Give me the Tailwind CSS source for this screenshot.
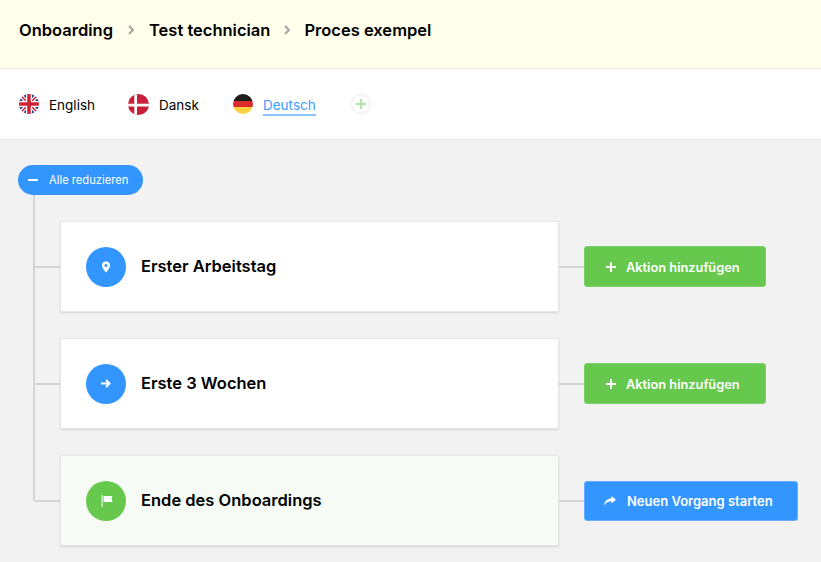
<!DOCTYPE html>
<html lang="de">
<head>
    <meta charset="UTF-8">
    <title>Proces exempel</title>
    <script src="https://cdn.jsdelivr.net/npm/@tailwindcss/browser@4"></script>
</head>
<body class="font-['Inter','Open_Sans',sans-serif] bg-[#f2f2f2] text-black overflow-hidden h-[562px]">

    <!-- Breadcrumb -->
    <div class="h-[69px] bg-[#ffffeb] border-b border-[#ebebdd] flex items-center pl-[19px] pb-[8px] text-[16.500px] font-semibold">
        <span>Onboarding</span>
        <svg class="w-[8px] h-[10px] mx-[14px]" viewBox="0 0 8 10" fill="none" stroke="#a3a3a3" stroke-width="2"><path d="M2 1l4 4-4 4"/></svg>
        <span>Test technician</span>
        <svg class="w-[8px] h-[10px] mx-[13px]" viewBox="0 0 8 10" fill="none" stroke="#a3a3a3" stroke-width="2"><path d="M2 1l4 4-4 4"/></svg>
        <span>Proces exempel</span>
    </div>

    <!-- Languages -->
    <div class="h-[71px] bg-white border-b border-[#e8e8e8] flex items-center pl-[19px] text-[13.500px]">
        <svg class="w-[20px] h-[20px] mr-[10px]" viewBox="0 0 20 20">
            <defs><clipPath id="uk"><circle cx="10" cy="10" r="10"/></clipPath></defs>
            <g clip-path="url(#uk)">
                <rect width="20" height="20" fill="#27408b"/>
                <path d="M0 0L20 20M20 0L0 20" stroke="#fff" stroke-width="4"/>
                <path d="M0 0L20 20M20 0L0 20" stroke="#cf2035" stroke-width="1.5"/>
                <path d="M10 0V20M0 10H20" stroke="#fff" stroke-width="6"/>
                <path d="M10 0V20M0 10H20" stroke="#cf2035" stroke-width="3.5"/>
            </g>
        </svg>
        <span class="w-[79px] pt-[2px]">English</span>
        <svg class="w-[21px] h-[21px] mr-[10px]" viewBox="0 0 20 20">
            <defs><clipPath id="dk"><circle cx="10" cy="10" r="10"/></clipPath></defs>
            <g clip-path="url(#dk)">
                <rect width="20" height="20" fill="#c8203a"/>
                <path d="M7.300 0V20M0 10.500H20" stroke="#fff" stroke-width="2.600"/>
            </g>
        </svg>
        <span class="w-[74px] pt-[2px]">Dansk</span>
        <svg class="w-[20px] h-[20px] mr-[10px] -mt-[1px]" viewBox="0 0 20 20">
            <defs><clipPath id="de"><circle cx="10" cy="10" r="10"/></clipPath></defs>
            <g clip-path="url(#de)">
                <rect width="20" height="7" fill="#1d1d1b"/>
                <rect y="7" width="20" height="6" fill="#dd2a2a"/>
                <rect y="13" width="20" height="7" fill="#fcd13f"/>
            </g>
        </svg>
        <span class="w-[53px] text-[#3d9bfb] border-b-2 border-[#8cc4fd] leading-[18px] mt-[3px] mr-[35px] whitespace-nowrap">Deutsch</span>
        <span class="w-[20px] h-[20px] rounded-full border border-[#eeeeee] flex items-center justify-center">
            <svg class="w-[12px] h-[12px]" viewBox="0 0 12 12" stroke="#b3e5a6" stroke-width="2"><path d="M6 1V11M1 6H11"/></svg>
        </span>
    </div>

    <!-- Tree -->
    <div class="pt-[25px]">
        <button class="ml-[18px] w-[125px] h-[30px] rounded-full bg-[#3396ff] text-white text-[11.200px] flex items-center pl-[10px]">
            <span class="w-[10px] h-[2px] bg-white mr-[11px]"></span>
            Alle reduzieren
        </button>

        <div class="relative ml-[33px] pl-[2px] pt-[26px]">
            <div class="absolute left-0 top-0 w-[2px] h-[306px] bg-[#d4d4d4]"></div>

            <div class="flex items-center mb-[26px]">
                <div class="w-[25px] h-[2px] bg-[#d4d4d4]"></div>
                <div class="w-[499px] h-[91px] bg-white border border-[#e6e6e6] rounded-[2px] shadow-[0_1px_2px_rgba(0,0,0,0.12)] flex items-center pl-[25px]">
                    <div class="w-[40px] h-[40px] rounded-full bg-[#3396ff] flex items-center justify-center">
                        <svg class="w-[8px] h-[12px]" viewBox="0.2 0 8.600 12"><path fill="#fff" fill-rule="evenodd" d="M4.500 0A4.300 4.300 0 0 0 .2 4.300C.2 7.200 4.500 12 4.500 12s4.300-4.800 4.300-7.700A4.300 4.300 0 0 0 4.500 0zm0 2.700a1.700 1.700 0 1 1 0 3.400 1.700 1.700 0 0 1 0-3.400z"/></svg>
                    </div>
                    <span class="ml-[15px] text-[16.500px] font-semibold">Erster Arbeitstag</span>
                </div>
                <div class="w-[25px] h-[2px] bg-[#d4d4d4]"></div>
                <button class="w-[182px] h-[41px] bg-[#66c94d] border border-[#7ed16a] rounded-[3px] text-white text-[12.800px] font-semibold flex items-center pl-[21px]">
                    <svg class="w-[10px] h-[10px] mr-[10px]" viewBox="0 0 10 10" stroke="#fff" stroke-width="2"><path d="M5 0V10M0 5H10"/></svg>
                    <span class="pt-[2px]">Aktion hinzufügen</span>
                </button>
            </div>

            <div class="flex items-center mb-[26px]">
                <div class="w-[25px] h-[2px] bg-[#d4d4d4]"></div>
                <div class="w-[499px] h-[91px] bg-white border border-[#e6e6e6] rounded-[2px] shadow-[0_1px_2px_rgba(0,0,0,0.12)] flex items-center pl-[25px]">
                    <div class="w-[40px] h-[40px] rounded-full bg-[#3396ff] flex items-center justify-center">
                        <svg class="w-[10px] h-[9px]" viewBox="0 0 10 9" fill="none" stroke="#fff" stroke-width="2"><path d="M0 4.500H8.500M5 1l3.500 3.500L5 8"/></svg>
                    </div>
                    <span class="ml-[15px] text-[16.500px] font-semibold">Erste 3 Wochen</span>
                </div>
                <div class="w-[25px] h-[2px] bg-[#d4d4d4]"></div>
                <button class="w-[182px] h-[41px] bg-[#66c94d] border border-[#7ed16a] rounded-[3px] text-white text-[12.800px] font-semibold flex items-center pl-[21px]">
                    <svg class="w-[10px] h-[10px] mr-[10px]" viewBox="0 0 10 10" stroke="#fff" stroke-width="2"><path d="M5 0V10M0 5H10"/></svg>
                    <span class="pt-[2px]">Aktion hinzufügen</span>
                </button>
            </div>

            <div class="flex items-center">
                <div class="w-[25px] h-[2px] bg-[#d4d4d4]"></div>
                <div class="w-[499px] h-[91px] bg-[#f6fbf5] border border-[#e6e6e6] rounded-[2px] shadow-[0_1px_2px_rgba(0,0,0,0.12)] flex items-center pl-[25px]">
                    <div class="w-[40px] h-[40px] rounded-full bg-[#66c94d] flex items-center justify-center">
                        <svg class="w-[12px] h-[12px] ml-[1px]" viewBox="0 0 12 12" fill="#fff"><rect x="0.500" y="0" width="1.200" height="12" opacity=".8"/><path d="M2.500 1H11.500L10.500 3.500L11.500 7H2.500z"/></svg>
                    </div>
                    <span class="ml-[15px] text-[16.500px] font-semibold">Ende des Onboardings</span>
                </div>
                <div class="w-[25px] h-[2px] bg-[#d4d4d4]"></div>
                <button class="w-[214px] h-[40px] bg-[#3396ff] border border-[#66adff] rounded-[3px] text-white text-[13px] font-semibold flex items-center pl-[19px]">
                    <svg class="w-[12px] h-[10px] mr-[11px]" viewBox="0 0 12 10" fill="#fff"><path d="M7.500 0L12 3.800 7.500 7.500V5.200C4.500 5.200 2 6.200 0 9.500 .6 5.500 3 2.600 7.500 2.300z"/></svg>
                    <span class="pt-[2px]">Neuen Vorgang starten</span>
                </button>
            </div>
        </div>
    </div>
</body>
</html>
